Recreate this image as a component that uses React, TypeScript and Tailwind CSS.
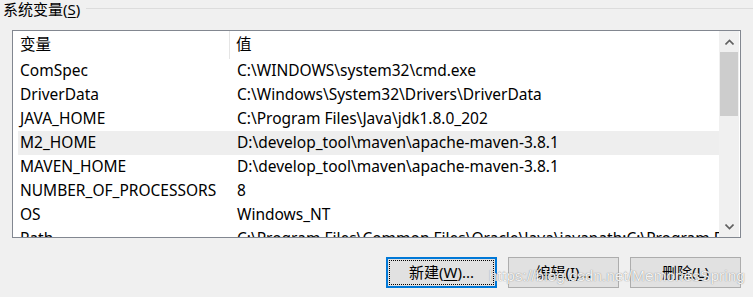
const rows = [
  { name: "ComSpec", value: "C:\\WINDOWS\\system32\\cmd.exe" },
  { name: "DriverData", value: "C:\\Windows\\System32\\Drivers\\DriverData" },
  { name: "JAVA_HOME", value: "C:\\Program Files\\Java\\jdk1.8.0_202" },
  { name: "M2_HOME", value: "D:\\develop_tool\\maven\\apache-maven-3.8.1", selected: true },
  { name: "MAVEN_HOME", value: "D:\\develop_tool\\maven\\apache-maven-3.8.1" },
  { name: "NUMBER_OF_PROCESSORS", value: "8" },
  { name: "OS", value: "Windows_NT" },
  { name: "Path", value: "C:\\Program Files\\Common Files\\Oracle\\Java\\javapath;C:\\Program Files" },
];

const font = "font-['Noto_Sans','Noto_Sans_CJK_SC',sans-serif]";

function Chevron({ up }: { up?: boolean }) {
  return (
    <svg width="9" height="6" viewBox="0 0 9 6" className="block">
      <path
        d={up ? "M0.5 5.5 L4.5 1.5 L8.5 5.5" : "M0.5 0.5 L4.5 4.5 L8.5 0.5"}
        fill="none"
        stroke="#606060"
        strokeWidth="1.6"
      />
    </svg>
  );
}

function Button({ label, hotkey, tail, primary }: { label: string; hotkey: string; tail: string; primary?: boolean }) {
  return (
    <button
      className={`w-[111px] h-[31px] bg-[#e1e1e1] text-[15px] text-black leading-none flex items-center justify-center ${
        primary ? "border-2 border-[#0078d7] p-px" : "border border-[#adadad]"
      }`}
    >
      <span
        className={`flex w-full h-full items-center justify-center ${
          primary ? "border border-dotted border-black" : ""
        }`}
      >
        {label}(<span className="underline underline-offset-2">{hotkey}</span>){tail}
      </span>
    </button>
  );
}

export default function App() {
  return (
    <div className={`relative w-[753px] h-[297px] bg-[#f0f0f0] overflow-hidden text-[15px] text-black ${font}`}>
      <div className="flex items-start h-[20px] pl-[3px]">
        <span className="leading-[18px] pr-[6px]">
          系统变量(<span className="underline underline-offset-2">S</span>)
        </span>
        <div className="flex-1 h-px mt-[8px] bg-[#dcdcdc]" />
      </div>

      <div className="ml-[12px] mt-[10px] w-[729px] h-[208px] border border-[#828790] bg-white flex overflow-hidden text-[15.5px]">
        <div className="flex-1 flex flex-col overflow-hidden">
          <div className="flex h-[28px] items-center shrink-0">
            <div className="w-[217px] h-full flex items-center pl-[7px] border-r border-[#e5e5e5]">变量</div>
            <div className="pl-[6px]">值</div>
          </div>
          {rows.map((r) => (
            <div
              key={r.name}
              className={`flex h-[24px] shrink-0 items-center ml-[5px] whitespace-nowrap ${
                r.selected ? "bg-[#eeeeee]" : ""
              }`}
            >
              <div className="w-[219px] shrink-0 pl-[2px]">{r.name}</div>
              <div>{r.value}</div>
            </div>
          ))}
        </div>
        <div className="w-[20px] bg-[#f0f0f0] flex flex-col mr-px">
          <div className="h-[21px] flex items-center justify-center">
            <Chevron up />
          </div>
          <div className="h-[64px] bg-[#cdcdcd] mx-px" />
          <div className="flex-1" />
          <div className="h-[21px] flex items-center justify-center">
            <Chevron />
          </div>
        </div>
      </div>

      <div className="flex justify-end gap-[11px] mt-[19px] w-[741px]">
        <Button label="新建" hotkey="W" tail="..." primary />
        <Button label="编辑" hotkey="I" tail="..." />
        <Button label="删除" hotkey="L" tail="" />
      </div>

      <div className="absolute left-[489px] top-[264px] text-[15.5px] text-white/90 font-['Liberation_Sans',sans-serif] [text-shadow:0_0_1px_rgba(90,90,90,0.9)] pointer-events-none">
        https://blog.csdn.net/MemoriesSpring
      </div>
    </div>
  );
}
